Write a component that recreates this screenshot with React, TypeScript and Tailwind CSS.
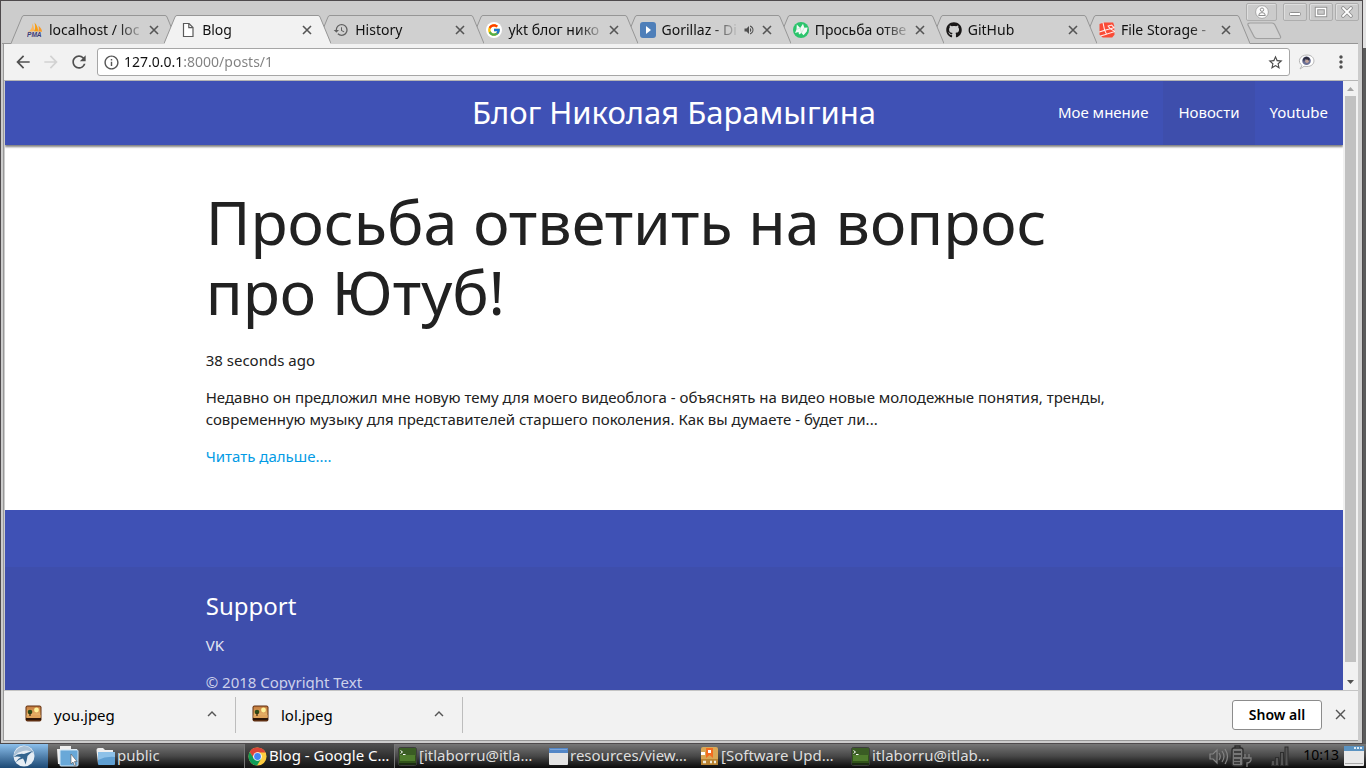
import type { ReactNode } from 'react';
import {
  MdArrowBack,
  MdArrowForward,
  MdClose,
  MdExpandLess,
  MdHistory,
  MdInfoOutline,
  MdMoreVert,
  MdRefresh,
  MdStarBorder,
  MdVolumeUp,
} from 'react-icons/md';
import { FaGithub } from 'react-icons/fa';
import { FcGoogle } from 'react-icons/fc';

/* ---------- favicons ---------- */

function PmaIcon() {
  return (
    <svg width="17" height="16" viewBox="0 0 17 16">
      <path d="M5.400 0.800C6.200 4 5 7.500 1 9.900L7.400 9.400C7.600 6 7 3 5.400 .8Z" fill="#fbb55a" />
      <path d="M8 0C11 3 12 7 11.600 9.600L7.400 9.400C9 6.500 9 3.500 8 0Z" fill="#f89c0e" />
      <path d="M12 3.200C14.500 5 15.800 7.500 16 9.800L11.800 9.600C12.800 7 12.800 5 12 3.200Z" fill="#f79a2a" />
      <text x="0" y="15.500" fontFamily="Liberation Sans, sans-serif" fontSize="7" fontWeight="700" fontStyle="italic" fill="#3c3c78">
        PMA
      </text>
    </svg>
  );
}

function PageIcon() {
  return (
    <svg width="16" height="16" viewBox="0 0 16 16" fill="#fff" stroke="#5a5a5a" strokeWidth="1.200">
      <path d="M3.500 1.500H9L13 5.500V14.500H3.500Z" />
      <path d="M8.800 1.700V5.700H12.800" fill="none" />
    </svg>
  );
}

function GoogleIcon() {
  return (
    <span className="flex size-4 items-center justify-center rounded-full bg-white">
      <FcGoogle size={14} />
    </span>
  );
}

function PlayIcon() {
  return (
    <svg width="16" height="16" viewBox="0 0 16 16">
      <rect width="16" height="16" rx="3" fill="#4f7fb9" />
      <path d="M6 4L11 8L6 12Z" fill="#fff" />
    </svg>
  );
}

function GreenIcon() {
  return (
    <svg width="16" height="16" viewBox="0 0 16 16">
      <circle cx="8" cy="8" r="8" fill="#2bc46c" />
      <path d="M3.800 2.500L7.200 6L10 1.800L11.300 5.800L14.600 5.500L13.800 9.500L10.500 13.300L8.500 11L6 12.500L5.500 10L2 11L3.500 7.500Z" fill="#f4fbf7" />
      <path d="M7.200 6L8.500 11M11.300 5.800L8.500 11M3.500 7.500L7.200 6" stroke="#b5dfc6" strokeWidth="0.600" fill="none" />
    </svg>
  );
}

function LaravelIcon() {
  return (
    <svg width="17" height="16" viewBox="0 0 17 16">
      <path d="M0.500 1.500L5 0H15L16 3L16.500 13L14 16H4L0.500 13Z" fill="#fa4b36" />
      <path d="M4.200 0L6 8.300L0.300 10M6 8.300L12 6.800L16.800 9.500L8 12.500L6 8.300M12 6.800L9.700 3.800L13.500 2.800L16 5.600L12 6.800M8 12.500L1.500 14.500" fill="none" stroke="#fff0ee" strokeWidth="1.100" />
    </svg>
  );
}

/* ---------- browser tabs ---------- */

type Tab = { title: string; icon: ReactNode; z: string; active?: boolean; audio?: boolean };

const tabs: Tab[] = [
  { title: 'localhost / loc', icon: <PmaIcon />, z: 'z-[8]' },
  { title: 'Blog', icon: <PageIcon />, z: 'z-[9]', active: true },
  { title: 'History', icon: <MdHistory size={16} color="#5f5f5f" />, z: 'z-[6]' },
  { title: 'ykt блог нико', icon: <GoogleIcon />, z: 'z-[5]' },
  { title: 'Gorillaz - Di', icon: <PlayIcon />, z: 'z-[4]', audio: true },
  { title: 'Просьба отве', icon: <GreenIcon />, z: 'z-[3]' },
  { title: 'GitHub', icon: <FaGithub size={16} color="#191717" />, z: 'z-[2]' },
  { title: 'File Storage -', icon: <LaravelIcon />, z: 'z-[1]' },
];

function BrowserTab({ tab }: { tab: Tab }) {
  const fill = tab.active ? '#f2f2f2' : '#d0d0d0';
  return (
    <div className={`relative -mr-[14px] flex h-[29px] min-w-0 flex-1 ${tab.z}`}>
      <svg className="shrink-0" width="13" height="29" viewBox="0 0 13 29">
        <path d="M0 29L11 2Q11.500 .5 13 .5V29Z" fill={fill} />
        <path d="M0 28.500L11 2Q11.500 .5 13 .5" fill="none" stroke="#969696" />
      </svg>
      <div
        className={`flex min-w-0 flex-1 items-center border-t border-[#969696] px-[3px] ${
          tab.active ? 'bg-[#f2f2f2]' : 'bg-[#d0d0d0]'
        }`}
      >
        <span className="flex w-4 shrink-0">{tab.icon}</span>
        <a
          href="#"
          className="ml-[6px] min-w-0 flex-1 overflow-hidden whitespace-nowrap text-[14px] leading-5 text-[#111] [mask-image:linear-gradient(to_right,black_calc(100%-28px),transparent)]"
        >
          {tab.title}
        </a>
        {tab.audio && <MdVolumeUp className="ml-1 mr-1 shrink-0" size={12} color="#505050" />}
        <button type="button" aria-label={`Close ${tab.title}`} className="flex size-4 shrink-0 items-center justify-center">
          <svg width="10" height="10" viewBox="0 0 10 10" stroke="#555" strokeWidth="1.600">
            <path d="M1 1L9 9M9 1L1 9" />
          </svg>
        </button>
      </div>
      <svg className="shrink-0" width="13" height="29" viewBox="0 0 13 29">
        <path d="M13 29L2 2Q1.500 .5 0 .5V29Z" fill={fill} />
        <path d="M13 28.500L2 2Q1.500 .5 0 .5" fill="none" stroke="#969696" />
      </svg>
    </div>
  );
}

function WindowButton({ label, wide, children }: { label: string; wide?: boolean; children: ReactNode }) {
  return (
    <button
      type="button"
      aria-label={label}
      className={`flex h-[18px] items-center justify-center rounded-[2px] border border-[#adadad] bg-[#cbcbcb] shadow-[inset_1px_1px_0_#dedede] ${
        wide ? 'mr-1 w-[31px]' : 'w-6'
      }`}
    >
      {children}
    </button>
  );
}

function TabStrip() {
  return (
    <div className="relative flex h-[43px] shrink-0 items-end border-b border-[#969696] bg-[#cccccc] pl-[9px]">
      <div className="-mb-px flex min-w-0 flex-1 pr-[14px]">
        {tabs.map((tab) => (
          <BrowserTab key={tab.title} tab={tab} />
        ))}
      </div>
      <button type="button" aria-label="New tab" className="mb-[3px] mr-[76px] -ml-[3px] shrink-0">
        <svg width="35" height="18" viewBox="0 0 35 18">
          <path d="M3 1H25Q27 1 28 3L33.500 14.500Q34 16.500 32 16.500H10Q8 16.500 7 14.500L1 3Q.5 1 3 1Z" fill="#d2d2d2" stroke="#a0a0a0" strokeWidth="1.200" />
        </svg>
      </button>
      <div className="absolute -right-px top-[2px] flex gap-[2px]">
        <WindowButton label="Profile" wide>
          <svg className="shrink-0" width="14" height="14" viewBox="0 0 14 14">
            <circle cx="7" cy="7" r="6.400" fill="#fafafa" stroke="#a8a8a8" />
            <circle cx="7" cy="4.700" r="1.700" fill="#fff" stroke="#8f8f8f" />
            <path d="M3.700 10.500Q3.700 7.600 7 7.600Q10.300 7.600 10.300 10.500Z" fill="#fff" stroke="#8f8f8f" />
          </svg>
        </WindowButton>
        <WindowButton label="Minimize">
          <svg width="14" height="12" viewBox="0 0 14 12">
            <rect x="1.500" y="6.500" width="11" height="3" rx="1" fill="#fff" stroke="#8f8f8f" />
          </svg>
        </WindowButton>
        <WindowButton label="Maximize">
          <svg width="14" height="12" viewBox="0 0 14 12">
            <rect x="2.500" y="2.500" width="9" height="7" fill="none" stroke="#8f8f8f" strokeWidth="3.400" />
            <rect x="2.500" y="2.500" width="9" height="7" fill="none" stroke="#fff" strokeWidth="1.500" />
          </svg>
        </WindowButton>
        <WindowButton label="Close window">
          <svg width="12" height="12" viewBox="0 0 12 12">
            <path d="M2 2L10 10M10 2L2 10" stroke="#8f8f8f" strokeWidth="3.600" strokeLinecap="round" />
            <path d="M2 2L10 10M10 2L2 10" stroke="#fff" strokeWidth="1.800" strokeLinecap="round" />
          </svg>
        </WindowButton>
      </div>
    </div>
  );
}

function Toolbar() {
  return (
    <div className="flex h-[37px] shrink-0 items-center border-b border-[#b5b5b5] bg-[#f2f2f2] pl-[9px] pr-[7px]">
      <button type="button" aria-label="Back" className="mr-2">
        <MdArrowBack size={20} color="#505050" />
      </button>
      <button type="button" aria-label="Forward" className="mr-2">
        <MdArrowForward size={20} color="#d2d2d2" />
      </button>
      <button type="button" aria-label="Reload" className="mr-2">
        <MdRefresh size={20} color="#505050" />
      </button>
      <div className="flex h-7 min-w-0 flex-1 items-center rounded-[3px] border border-[#a6a6a6] bg-white px-[5px]">
        <MdInfoOutline size={17} color="#555" />
        <input
          aria-label="Address"
          defaultValue="127.0.0.1:8000/posts/1"
          className="ml-1 h-5 min-w-0 flex-1 bg-[linear-gradient(to_right,#111_60px,#808080_60px)] bg-clip-text text-[14px] leading-5 text-transparent outline-none"
        />
        <button type="button" aria-label="Bookmark">
          <MdStarBorder size={17} color="#4a4a4a" />
        </button>
      </div>
      <button type="button" aria-label="Extension" className="ml-2 mr-[15px]">
        <svg width="18" height="16" viewBox="0 0 18 16">
          <path d="M2 15L4 11.500C-1 8 1.500 1 9 1C18 1 18.500 12.500 9 12.500L6 12.300Z" fill="#fff" stroke="#b5b5b5" />
          <circle cx="8.500" cy="6.700" r="4.300" fill="#6a6f94" />
          <path d="M5 5Q8.500 0.500 12 5L10.500 7L7 4.800L6 8Z" fill="#2c2c3c" />
          <circle cx="9" cy="7.200" r="1.800" fill="#c0a198" />
        </svg>
      </button>
      <button type="button" aria-label="Menu">
        <MdMoreVert size={20} color="#505050" />
      </button>
    </div>
  );
}

/* ---------- blog page ---------- */

function BlogPage() {
  return (
    <main className="min-w-0 flex-1 overflow-hidden bg-white text-[15px] leading-[22px] text-[#212121]">
      <nav className="relative flex h-16 justify-end bg-[#3f51b5] text-white shadow-[0_2px_2px_rgba(0,0,0,0.5)]">
        <h2 className="absolute inset-x-0 text-center text-[31px] leading-[62px]">
          <a href="#">Блог Николая Барамыгина</a>
        </h2>
        <ul className="relative flex h-full leading-[62px]">
          <li>
            <a href="#" className="block h-full px-[15px]">Мое мнение</a>
          </li>
          <li>
            <a href="#" className="block h-full bg-[#3e4eac] px-[15px]">Новости</a>
          </li>
          <li>
            <a href="#" className="block h-full px-[15px]">Youtube</a>
          </li>
        </ul>
      </nav>
      <article className="mx-auto w-[70%] pt-[42px]">
        <h1 className="text-[61px] leading-[70px]">Просьба ответить на вопрос про Ютуб!</h1>
        <p className="mt-[22px]">38 seconds ago</p>
        <p className="mt-[15px]">
          Недавно он предложил мне новую тему для моего видеоблога - объяснять на видео новые молодежные понятия, тренды,
          современную музыку для представителей старшего поколения. Как вы думаете - будет ли...
        </p>
        <p className="mt-[15px]">
          <a href="#" className="text-[#039be5]">Читать дальше....</a>
        </p>
      </article>
      <footer className="mt-[43px] bg-[#3f51b5] pt-[57px]">
        <div className="bg-[#3e4eac] pb-6 pt-[25px]">
          <div className="mx-auto w-[70%] text-[#e4e6f3]">
            <h5 className="text-[24px] leading-[27px] text-white">Support</h5>
            <a href="#" className="mt-[15px] block">VK</a>
            <p className="mt-[15px] text-[#cdd1ea]">© 2018 Copyright Text</p>
          </div>
        </div>
      </footer>
    </main>
  );
}

function Scrollbar() {
  return (
    <div className="flex w-[15px] shrink-0 flex-col items-center bg-[#f1f1f1]">
      <svg width="15" height="15" viewBox="0 0 15 15">
        <path d="M4 10L7.500 6L11 10Z" fill="#a3a3a3" />
      </svg>
      <div className="w-[11px] flex-1 bg-[#c1c1c1]" />
      <svg className="mt-3" width="15" height="16" viewBox="0 0 15 16">
        <path d="M4 6L7.500 10L11 6Z" fill="#505050" />
      </svg>
    </div>
  );
}

/* ---------- downloads ---------- */

function DownloadItem({ name }: { name: string }) {
  return (
    <div className="flex h-9 w-[227px] items-center border-r border-[#bdbdbd] pb-[2px] pl-4 pr-[14px]">
      <svg width="17" height="17" viewBox="0 0 17 17">
        <defs>
          <linearGradient id="sunset" x1="0" y1="0" x2="0" y2="1">
            <stop offset="0" stopColor="#c47a3d" />
            <stop offset="1" stopColor="#f3c678" />
          </linearGradient>
        </defs>
        <rect x=".5" y=".5" width="16" height="16" rx="2" fill="#5e2f12" />
        <rect x="1.500" y="1.500" width="14" height="11" fill="url(#sunset)" />
        <circle cx="11.500" cy="5" r="2.400" fill="#fff39a" />
        <path d="M1.500 10.500Q8 9 15.500 10V13H1.500Z" fill="#e0a45c" />
        <circle cx="5" cy="7" r="2.300" fill="#2d4a17" />
        <path d="M5 8V11" stroke="#3c250e" strokeWidth="1.200" />
        <path d="M1 13H16V15H1Z" fill="#2c1508" />
      </svg>
      <a href="#" className="ml-3 flex-1 pt-[3px] text-[15px] leading-5 text-black">{name}</a>
      <button type="button" aria-label={`Options for ${name}`}>
        <MdExpandLess size={18} color="#555" />
      </button>
    </div>
  );
}

function DownloadsBar() {
  return (
    <div className="flex h-[50px] shrink-0 items-center border-t border-[#c4c4c4] bg-[#f2f2f2] pb-[2px] pl-[5px] pr-[9px]">
      <DownloadItem name="you.jpeg" />
      <DownloadItem name="lol.jpeg" />
      <button type="button" className="ml-auto h-[30px] w-[90px] rounded-[3px] border border-[#8c8c8c] bg-white text-[14px] font-semibold text-black">
        Show all
      </button>
      <button type="button" aria-label="Close downloads" className="ml-[10px]">
        <MdClose size={17} color="#555" />
      </button>
    </div>
  );
}

/* ---------- desktop taskbar ---------- */

function TerminalIcon() {
  return (
    <svg width="19" height="19" viewBox="0 0 19 19">
      <rect x=".5" y=".5" width="18" height="18" rx="2" fill="#31531a" stroke="#3d3d3d" />
      <rect x="1" y="1" width="17" height="8" rx="1" fill="#3a5c24" />
      <rect x="2" y="8" width="15" height="6" fill="#4f7c2d" />
      <path d="M2.500 3.500L4.500 5L2.500 6.500M5 7.500H7.500" stroke="#fff" fill="none" />
      <path d="M1 16H18V18H1Z" fill="#1c2c12" />
    </svg>
  );
}

function FolderIcon() {
  return (
    <svg width="19" height="19" viewBox="0 0 19 19">
      <path d="M.5 3Q.5 1 2.500 1H7L9 3H17V16L2 17Z" fill="#efefef" />
      <rect x="2" y="5" width="17" height="13" rx="1" fill="#5f9fd2" />
      <path d="M2 5H19V10Q10 9 2 13Z" fill="#8dc1e8" />
    </svg>
  );
}

function ChromeIcon() {
  return (
    <svg width="19" height="19" viewBox="0 0 20 20">
      <circle cx="10" cy="10" r="9.500" fill="#ffcd40" />
      <path d="M1.800 5.200A9.500 9.500 0 0 1 18.500 5.800H10L6 12Z" fill="#db4437" />
      <path d="M1.800 5.200A9.500 9.500 0 0 0 9.500 19.500L14 12.200H6.200Z" fill="#0f9d58" />
      <circle cx="10" cy="10" r="4.600" fill="#fff" />
      <circle cx="10" cy="10" r="3.600" fill="#4285f4" />
    </svg>
  );
}

function WindowIcon() {
  return (
    <svg width="19" height="17" viewBox="0 0 19 17">
      <rect width="19" height="17" rx="1" fill="#e4e4e4" />
      <rect width="19" height="5" fill="#5386c6" />
      <path d="M1 1.500H18" stroke="#7da6da" />
    </svg>
  );
}

function PackageIcon() {
  return (
    <svg width="19" height="18" viewBox="0 0 19 18">
      <rect x="1" width="17" height="18" rx="2" fill="#d9a755" />
      <rect x="1" y="12" width="17" height="6" fill="#b88232" />
      <path d="M6 1H13V11L9.500 8L6 11Z" fill="#f36d21" />
      <path d="M8 3H11V6H8ZM1 5H5V8H1Z" fill="#fff" />
      <path d="M3 15H6M10 15H12M14 15H16" stroke="#f0ead8" strokeWidth="2.500" />
    </svg>
  );
}

type Task = { title: string; icon: ReactNode; active?: boolean };

const tasks: Task[] = [
  { title: 'public', icon: <FolderIcon /> },
  { title: 'Blog - Google C…', icon: <ChromeIcon />, active: true },
  { title: '[itlaborru@itla…', icon: <TerminalIcon /> },
  { title: 'resources/view…', icon: <WindowIcon /> },
  { title: '[Software Upd…', icon: <PackageIcon /> },
  { title: 'itlaborru@itlab…', icon: <TerminalIcon /> },
];

function Taskbar() {
  return (
    <div className="flex h-6 shrink-0 items-center bg-linear-to-b from-[#777] via-[#484848] to-[#0c0c0c] text-[14px] leading-5 text-[#dedede]">
      <button type="button" aria-label="Start" className="flex h-full w-12 items-center justify-center bg-linear-to-b from-[#8cc0ec] to-[#1d4a75]">
        <svg width="22" height="22" viewBox="0 0 22 22">
          <circle cx="11" cy="11" r="10.500" fill="#e6edf4" />
          <path d="M1 9Q4 2 11 1Q18 1 21 9Q16 4 10 6Q5 7 1 11Z" fill="#a9c0d5" />
          <path d="M0.500 12Q5 8 11 9Q15 7.500 20 6Q17 8.500 14.500 11Q14 15 12.500 19.500Q11.500 15.500 10 13.500Q6 14 2.500 17.500Q5 13.500 8 12Q4 11 .5 12Z" fill="#34658f" />
        </svg>
      </button>
      <button type="button" aria-label="Files" className="ml-[9px] mr-[14px]">
        <svg width="22" height="21" viewBox="0 0 22 21">
          <path d="M0 3H3V0H14V3H20V18H1Z" fill="#efefef" />
          <rect x="3" y="4" width="18" height="16" rx="1" fill="#69a8d8" stroke="#cfe5f5" />
          <path d="M14 8V18L16 16L17.500 20L19 19.500L17.500 15.500H20Z" fill="#fff" stroke="#555" strokeWidth=".6" />
        </svg>
      </button>
      <div className="flex min-w-0">
        {tasks.map((task) => (
          <button
            key={task.title}
            type="button"
            className={`flex h-6 w-[151px] min-w-0 items-center gap-[2px] pl-[3px] text-left ${
              task.active ? 'border-x border-[#777] bg-linear-to-b from-[#505050] to-[#151515] text-white' : ''
            }`}
          >
            <span className="shrink-0">{task.icon}</span>
            <span className="whitespace-nowrap pb-[2px] text-[15px]">{task.title}</span>
          </button>
        ))}
      </div>
      <div className="ml-auto flex shrink-0 items-center pr-[2px]">
        <svg width="20" height="20" viewBox="0 0 20 20" fill="none" stroke="#858585" strokeWidth="1.200">
          <path d="M1 8H4L8 4V17L4 13H1Z" fill="#4b4b4b" />
          <path d="M10 7Q12.500 10.500 10 14M13 5Q17 10.500 13 16M16 3Q21 10.500 16 18" />
        </svg>
        <svg className="ml-[2px]" width="22" height="23" viewBox="0 0 22 23" fill="none" stroke="#2c2c2c" strokeWidth="1.300">
          <rect x="1" y="3" width="11" height="18" rx="2" fill="#777" />
          <path d="M4 3V1H9V3M3 7H10M3 11H10M3 15H9M3 18H9" />
          <path d="M14 9V13M18 9V13M12 13H20V15Q19 18 16 18V22" stroke="#7c7c7c" />
        </svg>
        <svg className="ml-[18px] mr-[14px]" width="18" height="20" viewBox="0 0 18 20" fill="#555" stroke="#2e2e2e">
          <rect x=".5" y="14.500" width="3" height="5" />
          <rect x="4.500" y="11.500" width="3" height="8" />
          <rect x="9.500" y="6.500" width="3" height="13" />
          <rect x="14" y="1" width="3" height="18.500" />
        </svg>
        <time className="pb-[2px] text-black">10:13</time>
        <button type="button" aria-label="Show desktop" className="ml-[5px]">
          <svg width="20" height="20" viewBox="0 0 20 20">
            <rect width="20" height="20" rx="1" fill="#e9e9e9" />
            <rect width="20" height="5" fill="#5b93c1" />
            <path d="M10 2H18" stroke="#dceaf5" strokeWidth="2" strokeDasharray="2 1" />
            <path d="M1 17.500H19" stroke="#aaa" />
          </svg>
        </button>
      </div>
    </div>
  );
}

export default function App() {
  return (
    <div className="flex h-screen flex-col overflow-hidden bg-[linear-gradient(#e2e2e2_48px,#5a5a5a_48px)] font-['Noto_Sans',sans-serif]">
      <div className="mr-[3px] flex min-h-0 flex-1 flex-col border border-[#4e4a4c] bg-[#cccccc] pb-[2px] pl-px pr-1">
        <TabStrip />
        <div className="ml-px flex min-h-0 flex-1 flex-col border-b border-l border-[#999] bg-[#cccccc]">
          <Toolbar />
          <div className="flex min-h-0 flex-1 pl-px">
            <BlogPage />
            <Scrollbar />
          </div>
          <DownloadsBar />
        </div>
      </div>
      <Taskbar />
    </div>
  );
}
